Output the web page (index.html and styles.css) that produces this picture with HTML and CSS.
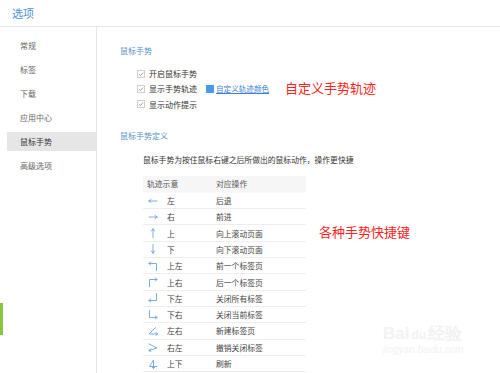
FILE: index.html
```html
<!DOCTYPE html>
<html>
<head>
<meta charset="utf-8">
<link rel="stylesheet" href="styles.css">
</head>
<body>
<div class="page">
  <div class="header"><span class="title">选项</span></div>
  <div class="main">
    <div class="sidebar">
      <div class="nav">常规</div>
      <div class="nav">标签</div>
      <div class="nav">下载</div>
      <div class="nav">应用中心</div>
      <div class="nav active">鼠标手势</div>
      <div class="nav">高级选项</div>
    </div>
    <div class="content">
      <div class="sec-title">鼠标手势</div>
      <div class="checks">
        <div class="check-row"><span class="cb"><svg width="8" height="8" viewBox="0 0 8 8"><rect x="0.5" y="0.5" width="7" height="7" fill="#fff" stroke="#cfcfcf"/><path d="M2 4.2 L3.4 5.6 L6 2.6" fill="none" stroke="#8a8a8a" stroke-width="0.9"/></svg></span>开启鼠标手势</div>
        <div class="check-row"><span class="cb"><svg width="8" height="8" viewBox="0 0 8 8"><rect x="0.5" y="0.5" width="7" height="7" fill="#fff" stroke="#cfcfcf"/><path d="M2 4.2 L3.4 5.6 L6 2.6" fill="none" stroke="#8a8a8a" stroke-width="0.9"/></svg></span>显示手势轨迹<span class="swatch"></span><span class="link">自定义轨迹颜色</span></div>
        <div class="check-row"><span class="cb"><svg width="8" height="8" viewBox="0 0 8 8"><rect x="0.5" y="0.5" width="7" height="7" fill="#fff" stroke="#cfcfcf"/><path d="M2 4.2 L3.4 5.6 L6 2.6" fill="none" stroke="#8a8a8a" stroke-width="0.9"/></svg></span>显示动作提示</div>
      </div>
      <div class="sec-title sec2">鼠标手势定义</div>
      <div class="desc">鼠标手势为按住鼠标右键之后所做出的鼠标动作，操作更快捷</div>
      <div class="table">
        <div class="row head"><span class="h1">轨迹示意</span><span>对应操作</span></div>
        <div class="row"><span class="ic"><svg width="10" height="10" viewBox="0 0 10 10"><path d="M1 5 H9 M1 5 L3 3.3 M1 5 L3 6.7" class="ar"/></svg></span><span>左</span><span>后退</span></div>
        <div class="row"><span class="ic"><svg width="10" height="10" viewBox="0 0 10 10"><path d="M1 5 H9 M9 5 L7 3.3 M9 5 L7 6.7" class="ar"/></svg></span><span>右</span><span>前进</span></div>
        <div class="row"><span class="ic"><svg width="10" height="10" viewBox="0 0 10 10"><path d="M5 1 V9.5 M5 1 L3.3 3 M5 1 L6.7 3" class="ar"/></svg></span><span>上</span><span>向上滚动页面</span></div>
        <div class="row"><span class="ic"><svg width="10" height="10" viewBox="0 0 10 10"><path d="M5 0.5 V9 M5 9 L3.3 7 M5 9 L6.7 7" class="ar"/></svg></span><span>下</span><span>向下滚动页面</span></div>
        <div class="row"><span class="ic"><svg width="10" height="10" viewBox="0 0 10 10"><path d="M8.5 9.5 V2.5 H1 M1 2.5 L2.8 0.9 M1 2.5 L2.8 4.1" class="ar"/></svg></span><span>上左</span><span>前一个标签页</span></div>
        <div class="row"><span class="ic"><svg width="10" height="10" viewBox="0 0 10 10"><path d="M1.5 9.5 V2.5 H9 M9 2.5 L7.2 0.9 M9 2.5 L7.2 4.1" class="ar"/></svg></span><span>上右</span><span>后一个标签页</span></div>
        <div class="row"><span class="ic"><svg width="10" height="10" viewBox="0 0 10 10"><path d="M8.5 0.5 V7.5 H1 M1 7.5 L2.8 5.9 M1 7.5 L2.8 9.1" class="ar"/></svg></span><span>下左</span><span>关闭所有标签</span></div>
        <div class="row"><span class="ic"><svg width="10" height="10" viewBox="0 0 10 10"><path d="M1.5 0.5 V7.5 H9 M9 7.5 L7.2 5.9 M9 7.5 L7.2 9.1" class="ar"/></svg></span><span>下右</span><span>关闭当前标签</span></div>
        <div class="row"><span class="ic"><svg width="10" height="10" viewBox="0 0 10 10"><path d="M7.5 1.5 L1 8 H9.5 M9.5 8 L7.8 6.5 M9.5 8 L7.8 9.5" class="ar"/></svg></span><span>左右</span><span>新建标签页</span></div>
        <div class="row"><span class="ic"><svg width="10" height="10" viewBox="0 0 10 10"><path d="M1 2 L9 6 L1 8.5 M1 8.5 L3 7 M1 8.5 L3 9.7" class="ar"/></svg></span><span>右左</span><span>撤销关闭标签</span></div>
        <div class="row"><span class="ic"><svg width="10" height="10" viewBox="0 0 10 10"><path d="M5.5 9.5 V1 L1.5 7.5 H9 M5.5 9.5 L3.8 7.8 M5.5 9.5 L7.2 7.8" class="ar"/></svg></span><span>上下</span><span>刷新</span></div>
      </div>
    </div>
  </div>
  <div class="note note1">自定义手势轨迹</div>
  <div class="note note2">各种手势快捷键</div>
  <div class="greenbar"></div>
  <div class="watermark"><div class="wm1">Bai<span class="wm-du">du</span>经验</div><div class="wm2">jingyan.baidu.com</div></div>
</div>
</body>
</html>
```

FILE: styles.css
```css
html, body {
  margin: 0;
  padding: 0;
  background: #fff;
}
body {
  font-family: "Noto Sans CJK SC", "Noto Sans", sans-serif;
  color: #444;
}
.page {
  position: relative;
  width: 500px;
  height: 373px;
  overflow: hidden;
}
.header {
  height: 26px;
  border-bottom: 1px solid #e6e6e6;
  display: flex;
  align-items: center;
  padding-left: 12px;
}
.title {
  font-size: 11px;
  color: #4e8fd8;
  line-height: 14px;
}
.main {
  display: flex;
  height: 346px;
}
.sidebar {
  width: 89px;
  padding-left: 7px;
  border-right: 1px solid #e6e6e6;
  padding-top: 8.5px;
  display: flex;
  flex-direction: column;
  gap: 5.2px;
}
.nav {
  height: 19px;
  line-height: 19px;
  padding-left: 13px;
  font-size: 8px;
  color: #666;
}
.nav.active {
  background: #e6e6e6;
  color: #333;
}
.content {
  flex: 1;
  padding-left: 23px;
  padding-top: 19px;
}
.sec-title {
  font-size: 8px;
  line-height: 10px;
  color: #5b8fd0;
}
.checks {
  padding-left: 17px;
  padding-top: 10px;
}
.check-row {
  display: flex;
  align-items: center;
  height: 15.3px;
  font-size: 8px;
  color: #333;
}
.cb {
  display: flex;
  width: 8px;
  height: 8px;
  margin-right: 4px;
}
.swatch {
  width: 8px;
  height: 8px;
  background: #4a9ae8;
  margin-left: 9px;
  margin-right: 2px;
}
.link {
  color: #3d7fd6;
  text-decoration: underline;
  font-size: 7.6px;
}
.sec2 {
  margin-top: 19.5px;
}
.desc {
  padding-left: 23px;
  margin-top: 13.5px;
  font-size: 7.8px;
  line-height: 10px;
  color: #333;
}
.table {
  margin-left: 23px;
  margin-top: 11px;
  width: 163px;
}
.row {
  display: grid;
  grid-template-columns: 24px 49px 1fr;
  align-items: center;
  height: 15.3px;
  border-bottom: 1px solid #eeeeee;
  font-size: 7.8px;
  color: #444;
}
.row.head {
  grid-template-columns: 73px 1fr;
  background: #f6f6f6;
  height: 16px;
  border-bottom: 1px solid #fafafa;
  color: #555;
}
.h1 {
  padding-left: 4px;
}
.ic {
  display: flex;
  padding-left: 5px;
}
.ar {
  fill: none;
  stroke: #6da3e3;
  stroke-width: 0.9;
  stroke-linecap: round;
  stroke-linejoin: round;
}
.note {
  position: absolute;
  color: #ff2222;
  font-size: 13px;
  line-height: 16px;
}
.note1 {
  left: 285px;
  top: 80px;
}
.note2 {
  left: 319px;
  top: 224px;
}
.greenbar {
  position: absolute;
  left: 0;
  top: 303px;
  width: 3px;
  height: 32px;
  background: #8cc63f;
}
.watermark {
  position: absolute;
  left: 383px;
  top: 325px;
  color: #f2f2f2;
  font-family: "Liberation Sans", sans-serif;
}
.wm1 {
  font-size: 17px;
  font-weight: bold;
  line-height: 18px;
}
.wm-du {
  font-size: 12px;
  margin: 0 2px;
}
.wm2 {
  font-size: 10px;
  font-style: italic;
  line-height: 12px;
}
```
